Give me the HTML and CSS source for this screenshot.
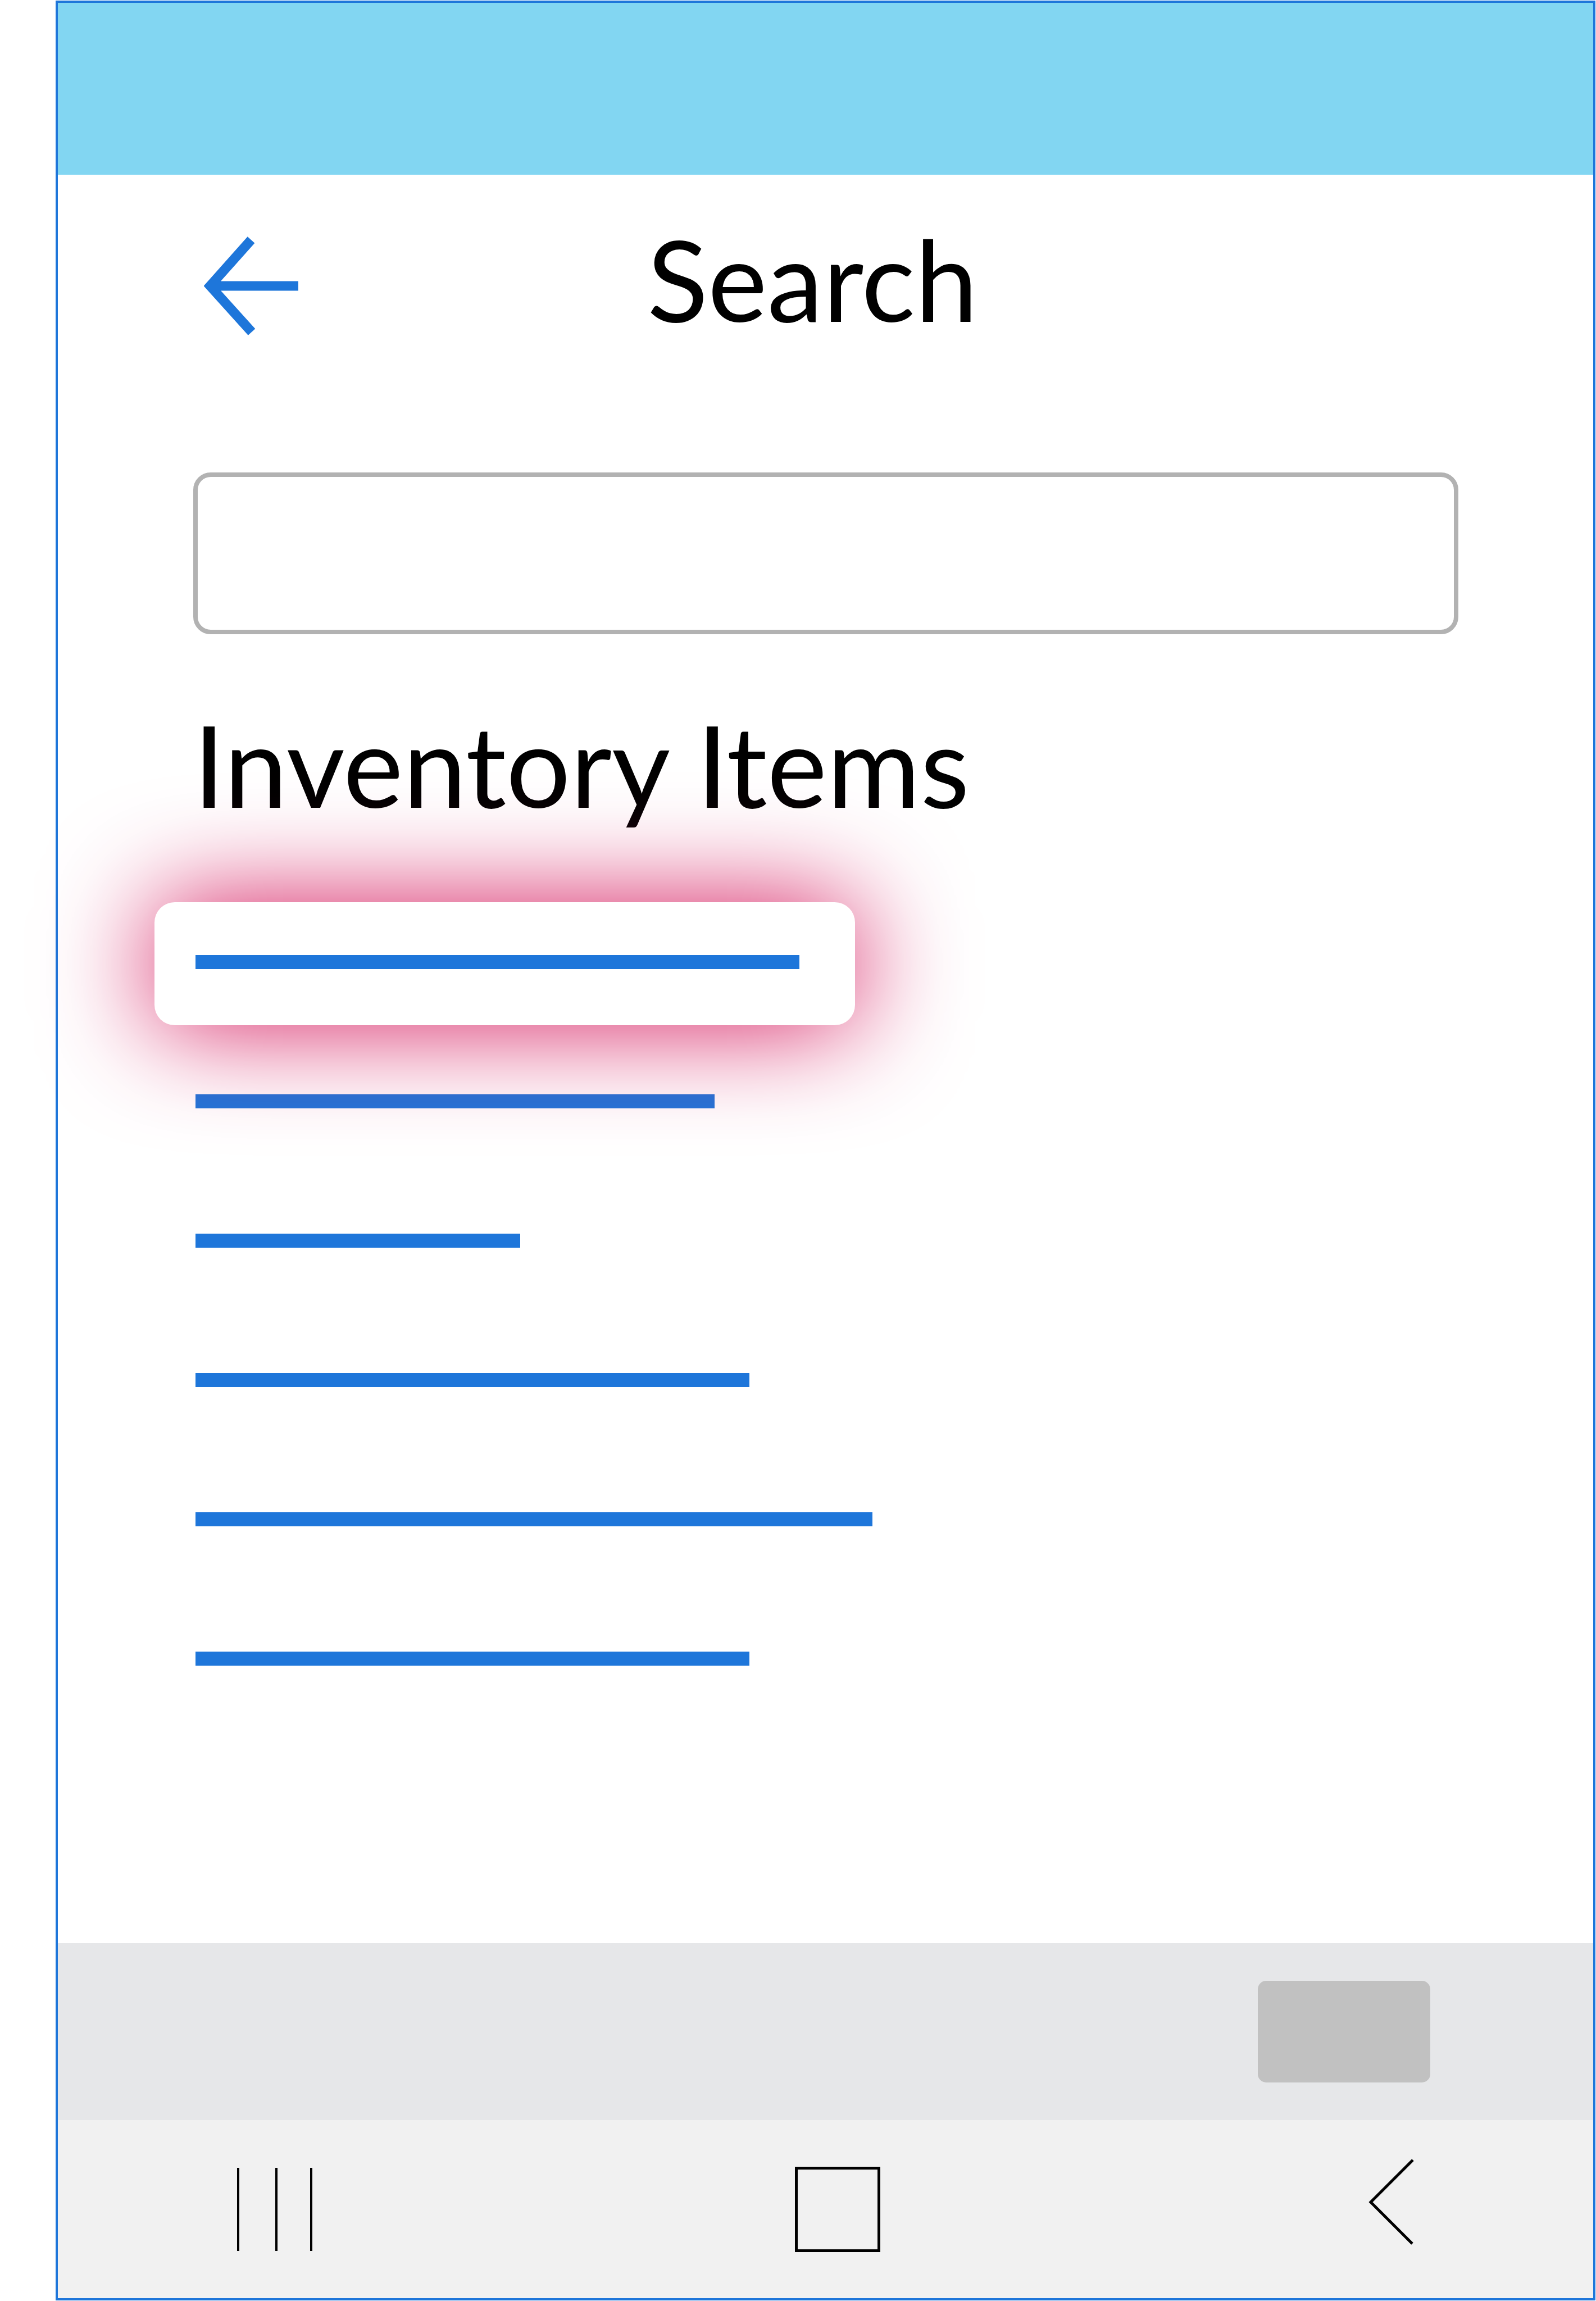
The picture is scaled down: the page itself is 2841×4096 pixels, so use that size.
FILE: index.html
```html
<!DOCTYPE html>
<html lang="en">
<head>
<meta charset="utf-8">
<meta name="viewport" content="width=device-width, initial-scale=1">
<title>Search</title>
<link rel="stylesheet" href="styles.css">
</head>
<body>
<div class="screen">
  <div class="status-bar"></div>
  <main class="content">
    <header class="header">
      <button class="icon-button" type="button" aria-label="Back">
        <svg width="168" height="176" viewBox="0 0 168 176" fill="none" stroke="#1e76da" stroke-width="17">
          <path d="M84 6 11 88 85 170M11 88H168"/>
        </svg>
      </button>
      <h1 class="title">Search</h1>
    </header>
    <input class="search-box" type="search" aria-label="Search">
    <h2 class="title section-title">Inventory Items</h2>
    <ul class="items">
      <li class="item item-active"><a class="bar" href="#item-1" aria-label="Item 1" style="width:1075px"></a></li>
      <li class="item"><a class="bar" href="#item-2" aria-label="Item 2" style="width:924px"></a></li>
      <li class="item"><a class="bar" href="#item-3" aria-label="Item 3" style="width:578px"></a></li>
      <li class="item"><a class="bar" href="#item-4" aria-label="Item 4" style="width:986px"></a></li>
      <li class="item"><a class="bar" href="#item-5" aria-label="Item 5" style="width:1205px"></a></li>
      <li class="item"><a class="bar" href="#item-6" aria-label="Item 6" style="width:986px"></a></li>
    </ul>
  </main>
  <div class="toolbar">
    <button class="action" type="button" aria-label="Action"></button>
  </div>
  <nav class="nav">
    <button class="icon-button" type="button" aria-label="Recent apps">
      <svg width="136" height="148" viewBox="0 0 136 148" stroke="#000" stroke-width="4">
        <path d="M3 0V148M71 0V148M133 0V148"/>
      </svg>
    </button>
    <button class="icon-button" type="button" aria-label="Home">
      <svg width="152" height="152" viewBox="0 0 152 152" fill="none" stroke="#000" stroke-width="5">
        <path d="M2.500 2.500H149.500V149.500H2.500Z"/>
      </svg>
    </button>
    <button class="icon-button" type="button" aria-label="Back">
      <svg width="92" height="180" viewBox="0 0 92 180" fill="none" stroke="#000" stroke-width="5">
        <path d="M90 2 15 77 89 151"/>
      </svg>
    </button>
  </nav>
</div>
</body>
</html>
```

FILE: styles.css
```css
* {
  box-sizing: border-box;
}

body {
  display: flex;
  min-height: 100vh;
  margin: 0;
  padding: 1px 1px 1px 99px;
  background: #fff;
  color: #000;
  font-family: Lato, "Open Sans", sans-serif;
}

.screen {
  flex: 1;
  display: flex;
  flex-direction: column;
  border: 4px solid #1e76da;
}

.status-bar {
  height: 306px;
  background: #82d6f2;
}

.content {
  flex: 1;
  display: flex;
  flex-direction: column;
  padding: 88px 240px 0 241px;
}

.header {
  display: flex;
  align-items: center;
  gap: 621px;
  height: 220px;
  padding-left: 19px;
}

.icon-button {
  display: block;
  padding: 0;
  border: 0;
  background: none;
}

.icon-button svg {
  display: block;
}

.title {
  margin: 0;
  padding-bottom: 26px;
  font-size: 200px;
  line-height: 220px;
  font-weight: 400;
}

.search-box {
  width: 100%;
  height: 288px;
  margin-top: 222px;
  padding: 0 40px;
  border: 8px solid #b2b2b2;
  border-radius: 31px;
  background: #fff;
  font: inherit;
  font-size: 120px;
}

.section-title {
  margin-top: 121px;
  font-size: 202px;
}

.items {
  display: flex;
  flex-direction: column;
  align-items: flex-start;
  gap: 29px;
  margin: 110px 0 0 -69px;
  padding: 0;
  list-style: none;
}

.item {
  padding: 94px 99px 100px 73px;
}

.item-active {
  position: relative;
  z-index: 1;
  border-radius: 36px;
  background: #fff;
  filter: drop-shadow(0 0 97px #d4145a);
}

.bar {
  display: block;
  height: 25px;
  background: #1e76da;
}

.toolbar {
  display: flex;
  align-items: center;
  justify-content: flex-end;
  height: 315px;
  padding-right: 290px;
  background: #e6e7e9;
}

.action {
  width: 307px;
  height: 181px;
  border: 0;
  border-radius: 15px;
  background: #c1c1c1;
}

.nav {
  display: flex;
  align-items: center;
  justify-content: space-between;
  height: 317px;
  padding: 0 319px 0 318px;
  background: #f1f1f1;
}
```
